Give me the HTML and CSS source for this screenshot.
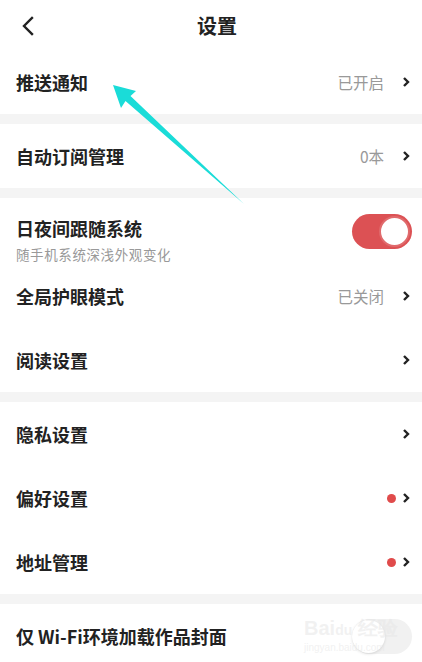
FILE: index.html
```html
<!DOCTYPE html>
<html>
<head>
  <title>设置</title>
  <link rel="stylesheet" href="styles.css">
</head>
<body>
  <div class="page">
    <div class="header">
      <svg class="back" width="14" height="20" viewBox="0 0 14 20">
        <polyline points="11,2 3,10 11,18" fill="none" stroke="#222" stroke-width="2.4" stroke-linecap="square"/>
      </svg>
      <div class="title">设置</div>
    </div>

    <div class="row">
      <span class="label">推送通知</span>
      <span class="value">已开启</span>
      <svg class="chev" width="8" height="12" viewBox="0 0 8 12"><polyline points="2,2 6,6 2,10" fill="none" stroke="#222" stroke-width="2.4"/></svg>
    </div>

    <div class="gap"></div>

    <div class="row">
      <span class="label">自动订阅管理</span>
      <span class="value">0本</span>
      <svg class="chev" width="8" height="12" viewBox="0 0 8 12"><polyline points="2,2 6,6 2,10" fill="none" stroke="#222" stroke-width="2.4"/></svg>
    </div>

    <div class="gap"></div>

    <div class="row row-tall">
      <div class="texts">
        <span class="label">日夜间跟随系统</span>
        <span class="sub">随手机系统深浅外观变化</span>
      </div>
      <div class="switch on"><div class="knob"></div></div>
    </div>

    <div class="row">
      <span class="label">全局护眼模式</span>
      <span class="value">已关闭</span>
      <svg class="chev" width="8" height="12" viewBox="0 0 8 12"><polyline points="2,2 6,6 2,10" fill="none" stroke="#222" stroke-width="2.4"/></svg>
    </div>

    <div class="row">
      <span class="label">阅读设置</span>
      <svg class="chev" width="8" height="12" viewBox="0 0 8 12"><polyline points="2,2 6,6 2,10" fill="none" stroke="#222" stroke-width="2.4"/></svg>
    </div>

    <div class="gap"></div>

    <div class="row">
      <span class="label">隐私设置</span>
      <svg class="chev" width="8" height="12" viewBox="0 0 8 12"><polyline points="2,2 6,6 2,10" fill="none" stroke="#222" stroke-width="2.4"/></svg>
    </div>

    <div class="row">
      <span class="label">偏好设置</span>
      <span class="dot"></span>
      <svg class="chev near" width="8" height="12" viewBox="0 0 8 12"><polyline points="2,2 6,6 2,10" fill="none" stroke="#222" stroke-width="2.4"/></svg>
    </div>

    <div class="row">
      <span class="label">地址管理</span>
      <span class="dot"></span>
      <svg class="chev near" width="8" height="12" viewBox="0 0 8 12"><polyline points="2,2 6,6 2,10" fill="none" stroke="#222" stroke-width="2.4"/></svg>
    </div>

    <div class="gap"></div>

    <div class="row">
      <span class="label">仅 Wi-Fi环境加载作品封面</span>
      <div class="switch off"><div class="knob"></div></div>
    </div>

    <!-- annotation arrow drawn over the screenshot -->
    <svg class="arrow" width="422" height="662" viewBox="0 0 422 662">
      <polygon points="113,85 136,91 130.5,96 244,204 125.5,101 121,108" fill="#1adcd8"/>
    </svg>

    <div class="watermark">
      <span class="wm-logo">Bai<b>du</b> 经验</span>
      <span class="wm-url">jingyan.baidu.com</span>
    </div>
  </div>
</body>
</html>
```

FILE: styles.css
```css
body {
  margin: 0;
  padding: 0;
  background: #fff;
  font-family: "Noto Sans CJK SC", "Noto Sans", sans-serif;
  color: #222;
}

.page {
  position: relative;
  width: 422px;
  height: 662px;
  overflow: hidden;
}

.header {
  height: 50px;
  display: flex;
  align-items: center;
  justify-content: center;
  position: relative;
  padding-left: 12px;
}

.back {
  position: absolute;
  left: 21px;
  top: 16px;
}

.title {
  font-size: 20px;
  font-weight: 600;
  margin-top: 1px;
}

.row {
  height: 64px;
  display: flex;
  align-items: center;
  padding: 0 12px 0 16px;
}

.row-tall {
  height: 66px;
}

.label {
  font-size: 18px;
  font-weight: 600;
  flex: 1;
  white-space: nowrap;
}

.texts {
  flex: 1;
  align-self: flex-start;
  display: flex;
  flex-direction: column;
  padding-top: 16px;
}

.texts .label {
  line-height: 28px;
}

.sub {
  font-size: 13.5px;
  color: #999;
  letter-spacing: 0.6px;
  line-height: 24px;
}

.value {
  font-size: 15.5px;
  color: #999;
  margin-right: 18px;
}

.chev {
  display: block;
}

.chev.near {
  margin-left: 6px;
}

.dot {
  width: 9px;
  height: 9px;
  border-radius: 50%;
  background: #e04b4b;
}

.gap {
  height: 10px;
  background: #f4f4f4;
}

.switch {
  width: 60px;
  height: 35px;
  border-radius: 18px;
  position: relative;
  margin-right: -2px;
}

.switch.on {
  background: #dc5154;
}

.switch.on .knob {
  position: absolute;
  right: 2px;
  top: 2px;
  width: 27px;
  height: 27px;
  border: 2px solid #e06a6c;
  border-radius: 50%;
  background: #fff;
}

.switch.off {
  background: #f1f1f1;
}

.switch.off .knob {
  position: absolute;
  left: 0;
  top: 1px;
  width: 33px;
  height: 33px;
  border-radius: 50%;
  background: #fff;
  box-shadow: 0 1px 3px rgba(0, 0, 0, 0.12);
}

.arrow {
  position: absolute;
  left: 0;
  top: 0;
  pointer-events: none;
}

.watermark {
  position: absolute;
  left: 304px;
  top: 616px;
  display: flex;
  flex-direction: column;
  color: rgba(230, 230, 230, 0.55);
  font-family: "Liberation Sans", sans-serif;
}

.wm-logo {
  font-size: 20px;
  font-weight: bold;
  line-height: 24px;
}

.wm-logo b {
  font-size: 14px;
}

.wm-url {
  font-size: 10px;
  line-height: 12px;
}
```
